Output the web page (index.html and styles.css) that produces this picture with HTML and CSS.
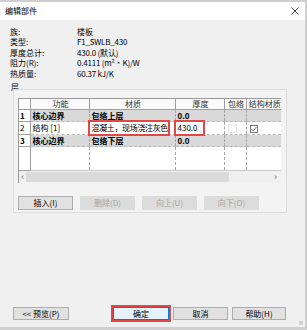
FILE: index.html
```html
<!DOCTYPE html>
<html lang="zh">
<head>
    <meta charset="UTF-8">
    <title>编辑部件</title>
    <link rel="stylesheet" href="styles.css">
</head>
<body>
    <div class="dialog">
        <div class="titlebar">
            <span>编辑部件</span>
            <svg class="close" width="8" height="8" viewBox="0 0 8 8">
                <path d="M0.5 0.5 L7.5 7.5 M7.5 0.5 L0.5 7.5" stroke="#333" stroke-width="0.9"/>
            </svg>
        </div>

        <div class="info">
            <span>族:</span><span>楼板</span>
            <span>类型:</span><span class="val">F1_SWLB_430</span>
            <span>厚度总计:</span><span class="val">430.0 (默认)</span>
            <span>阻力(R):</span><span class="val">0.4111 (m²·K)/W</span>
            <span>热质量:</span><span class="val">60.37 kJ/K</span>
        </div>

        <div class="layer-label">层</div>
        <div class="panel">
            <div class="grid-wrap">
                <table class="layers">
                    <colgroup>
                        <col style="width: 11px">
                        <col style="width: 59px">
                        <col style="width: 86px">
                        <col style="width: 49px">
                        <col style="width: 22px">
                        <col style="width: 35px">
                    </colgroup>
                    <tr class="head">
                        <th></th>
                        <th>功能</th>
                        <th>材质</th>
                        <th>厚度</th>
                        <th>包络</th>
                        <th>结构材质</th>
                    </tr>
                    <tr class="core r1">
                        <td class="num">1</td>
                        <td>核心边界</td>
                        <td>包络上层</td>
                        <td>0.0</td>
                        <td></td>
                        <td></td>
                    </tr>
                    <tr class="r2">
                        <td class="num">2</td>
                        <td>结构 [1]</td>
                        <td><span class="mark mat">混凝土，现场浇注灰色</span></td>
                        <td><span class="mark thick">430.0</span></td>
                        <td><span class="box"></span></td>
                        <td>
                            <svg class="check" width="8" height="8" viewBox="0 0 8 8">
                                <rect x="0.5" y="0.5" width="7" height="7" fill="#fff" stroke="#555" stroke-width="0.8"/>
                                <path d="M1.6 4.2 L3.2 5.8 L6.4 2" fill="none" stroke="#333" stroke-width="0.8"/>
                            </svg>
                        </td>
                    </tr>
                    <tr class="core r3">
                        <td class="num">3</td>
                        <td>核心边界</td>
                        <td>包络下层</td>
                        <td>0.0</td>
                        <td></td>
                        <td></td>
                    </tr>
                    <tr class="filler">
                        <td class="num"></td>
                        <td></td>
                        <td></td>
                        <td></td>
                        <td></td>
                        <td></td>
                    </tr>
                </table>
                <div class="hscroll">
                    <span class="arrow">‹</span>
                    <div class="thumb"></div>
                    <span class="arrow right">›</span>
                </div>
            </div>
            <div class="row-buttons">
                <button>插入(I)</button>
                <button disabled>删除(D)</button>
                <button disabled>向上(U)</button>
                <button disabled>向下(O)</button>
            </div>
        </div>

        <div class="footer">
            <button class="preview">&lt;&lt; 预览(P)</button>
            <button class="ok">确定</button>
            <button class="cancel">取消</button>
            <button class="help">帮助(H)</button>
            <span class="grip"></span>
        </div>
    </div>
</body>
</html>
```

FILE: styles.css
```css
body {
    margin: 0;
    width: 307px;
    height: 330px;
    background-color: #cfcfcf;
    font-family: "Noto Sans CJK SC", "Liberation Sans", sans-serif;
    font-size: 8px;
    color: #000;
    overflow: hidden;
}

.dialog {
    width: 305px;
    height: 325px;
    border-top: 2px solid #cfcfcf;
    border-right: 2px solid #cfcfcf;
    border-bottom: 3px solid #cfcfcf;
    background-color: #f0f0f0;
    display: flex;
    flex-direction: column;
}

.titlebar {
    height: 18px;
    background-color: #fff;
    display: flex;
    align-items: center;
    justify-content: space-between;
    padding: 0 6px 0 5px;
    line-height: 18px;
}

.info {
    display: grid;
    grid-template-columns: 67px auto;
    padding: 7px 0 0 10px;
    line-height: 10.4px;
}

.val {
    letter-spacing: -0.2px;
}

.layer-label {
    margin: 3px 0 -3px 11px;
    height: 10px;
    line-height: 10px;
}

.panel {
    margin-left: 13px;
    width: 268px;
    border: 1px solid #dcdcdc;
    background-color: #f3f3f3;
    padding: 8px 0 2px 4px;
}

.grid-wrap {
    width: 262px;
    border-left: 1px solid #9a9a9a;
    border-top: 1px solid #9a9a9a;
    background-color: #fff;
}

.layers {
    width: 262px;
    table-layout: fixed;
    border-collapse: collapse;
}

.layers th,
.layers td {
    padding: 0 0 0 2px;
    white-space: nowrap;
    overflow: visible;
    line-height: 10px;
    border-left: 1px dashed #a8a8a8;
    border-bottom: 1px dashed #b8b8b8;
}

.layers th {
    font-weight: normal;
    color: #333;
    text-align: center;
    height: 10px;
    border-left: 1px solid #a0a0a0;
    border-bottom: 1px solid #a0a0a0;
    background-color: #fafafa;
}

.layers th:first-child,
.layers td.num {
    border-left: none;
    border-right: 1px solid #a0a0a0;
    border-bottom: 1px solid #a0a0a0;
    background-color: #fff;
    padding-left: 1px;
}

.layers tr.head th:first-child + th {
    border-left: none;
}

.layers tr td.num + td {
    border-left: none;
}

.r1 td, .r3 td {
    height: 11px;
}

.r2 td {
    height: 12px;
}

.core td {
    background-color: #d9d9d9;
    font-weight: bold;
}

.filler td {
    height: 23px;
    border-bottom: 1px solid #c8c8c8;
}

.mark {
    display: inline-block;
    outline: 2px solid #e34848;
    outline-offset: 0;
    height: 12px;
    line-height: 12px;
    margin-left: -2px;
    padding-left: 2px;
}

.mark.mat {
    width: 76px;
    letter-spacing: -0.35px;
}

.mark.thick {
    width: 25px;
}

.box {
    display: inline-block;
    width: 7px;
    height: 7px;
    background-color: #fff;
    border: 1px solid #e6e6e6;
    margin-left: 1px;
    vertical-align: middle;
}

.check {
    margin-left: 1px;
    vertical-align: middle;
}

.hscroll {
    height: 12px;
    display: flex;
    align-items: center;
    background-color: #f0f0f0;
}

.arrow {
    width: 7px;
    text-align: center;
    font-size: 9px;
    line-height: 10px;
    color: #555;
}

.arrow.right {
    margin-left: auto;
    margin-right: 2px;
}

.thumb {
    width: 203px;
    height: 10px;
    background-color: #dadada;
}

.row-buttons {
    display: flex;
    gap: 7px;
    margin-top: 13px;
}

button {
    font-family: "Noto Sans CJK SC", "Liberation Sans", sans-serif;
    font-size: 8px;
    color: #000;
    background-color: #e1e1e1;
    border: 1px solid #adadad;
    padding: 0;
    height: 14px;
    line-height: 12px;
    width: 55px;
}

button:disabled {
    background-color: #dcdcdc;
    border-color: #dcdcdc;
    color: #a6a6a6;
}

.footer {
    margin-top: auto;
    display: flex;
    align-items: flex-end;
    padding: 0 0 7px 13px;
}

.footer button {
    height: 13px;
    line-height: 11px;
}

.preview {
    width: 56px;
}

.ok {
    margin-left: 44px;
    width: 56px;
    border-color: #0078d7;
    background-color: #e5f1fb;
    outline: 2px solid #e34848;
}

.cancel {
    margin-left: 4px;
    width: 55px;
}

.help {
    margin-left: 4px;
    width: 54px;
}

.grip {
    margin-left: auto;
    margin-right: 2px;
    margin-bottom: -5px;
    width: 4px;
    height: 4px;
    background: radial-gradient(circle, #b0b0b0 0.6px, transparent 0.8px) 0 0 / 2px 2px;
}
```
